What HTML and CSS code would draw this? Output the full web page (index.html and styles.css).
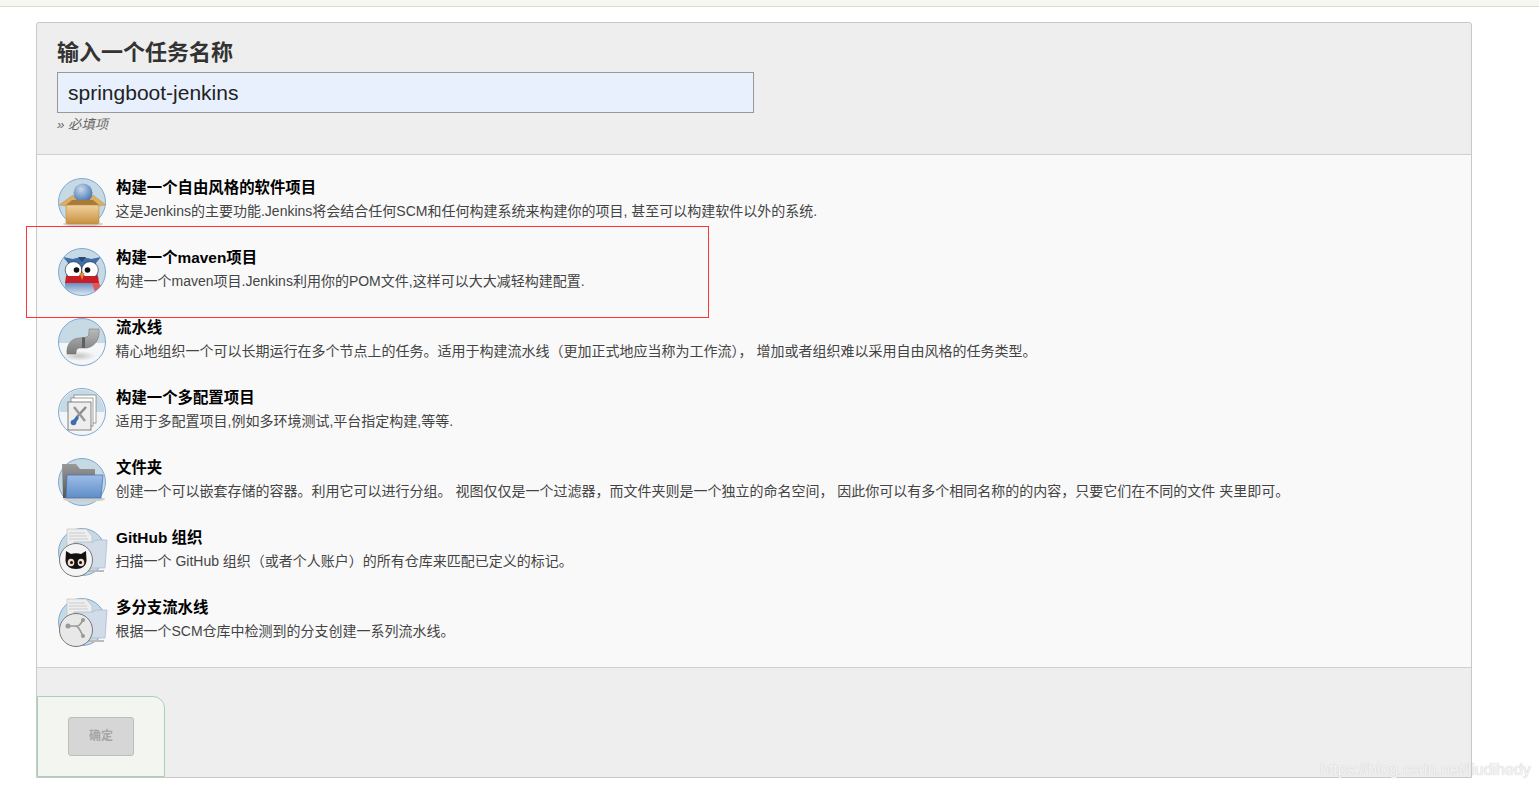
FILE: index.html
```html
<!DOCTYPE html>
<html lang="zh-CN">
<head>
<meta charset="utf-8">
<title>新建任务</title>
<link rel="stylesheet" href="styles.css">
</head>
<body>
<div class="topbar"></div>
<main class="page">
  <form class="panel">
    <section class="header">
      <h1 class="heading">输入一个任务名称</h1>
      <input class="name-input" type="text" value="springboot-jenkins">
      <div class="hint">» 必填项</div>
    </section>
    <section class="items">
      <div class="item">
        <svg class="icon" viewBox="0 0 48 50">
          <defs>
            <radialGradient id="ball" cx=".4" cy=".3" r=".8"><stop offset="0" stop-color="#c9d9ec"/><stop offset=".6" stop-color="#6f95c4"/><stop offset="1" stop-color="#3f639a"/></radialGradient>
            <linearGradient id="box" x1="0" y1="0" x2="0" y2="1"><stop offset="0" stop-color="#f0d29c"/><stop offset="1" stop-color="#c8903f"/></linearGradient>
          </defs>
          <circle cx="24" cy="24" r="23.5" fill="#c6dae6" stroke="#7fa8d4"/>
          <ellipse cx="25" cy="46" rx="20" ry="2.500" fill="#d0d0d0"/>
          <circle cx="25" cy="15" r="9.500" fill="url(#ball)"/>
          <path d="M1 27 15 17 19 24 8 28zM48 27 35 17 31 24 41 28z" fill="#dcae62" stroke="#b98a45" stroke-width=".4"/>
          <path d="M14 22H35L41 27H8z" fill="#a87a3a"/>
          <rect x="8" y="27" width="33" height="19" rx="2" fill="url(#box)" stroke="#b98a45" stroke-width=".6"/>
        </svg>
        <div class="text">
          <div class="title">构建一个自由风格的软件项目</div>
          <div class="desc">这是Jenkins的主要功能.Jenkins将会结合任何SCM和任何构建系统来构建你的项目, 甚至可以构建软件以外的系统.</div>
        </div>
      </div>
      <div class="item">
        <svg class="icon" viewBox="0 0 48 50">
          <defs>
            <clipPath id="c2"><circle cx="24" cy="24" r="23.5"/></clipPath>
            <linearGradient id="owlbody" x1="0" y1="0" x2="0" y2="1"><stop offset="0" stop-color="#5f86bd"/><stop offset="1" stop-color="#e8eef5"/></linearGradient>
          </defs>
          <circle cx="24" cy="24" r="23.5" fill="#c6dae6"/>
          <g clip-path="url(#c2)">
            <rect x="7" y="34" width="34" height="14" fill="url(#owlbody)"/>
            <path d="M5 9 15 11C20 9 28 9 33 11L43 9 38 15 40 30H8L10 15z" fill="#3f6fa8"/>
            <path d="M20 9h8l-4 5z" fill="#27497a"/>
            <circle cx="15.500" cy="22" r="8.300" fill="#fff" stroke="#223" stroke-width=".6"/>
            <circle cx="32" cy="22" r="8.300" fill="#fff" stroke="#223" stroke-width=".6"/>
            <circle cx="18.500" cy="22" r="2.800" fill="#111"/>
            <circle cx="29.500" cy="22" r="2.800" fill="#111"/>
            <path d="M8 28H40L41 35H7z" fill="#c81e26"/>
            <path d="M34 35H41L44 40 38 47z" fill="#e4565a"/>
            <path d="M21.500 25h5L24 32z" fill="#e98a2c"/>
          </g>
          <circle cx="24" cy="24" r="23.5" fill="none" stroke="#7fa8d4"/>
        </svg>
        <div class="text">
          <div class="title">构建一个maven项目</div>
          <div class="desc">构建一个maven项目.Jenkins利用你的POM文件,这样可以大大减轻构建配置.</div>
        </div>
      </div>
      <div class="item">
        <svg class="icon" viewBox="0 0 48 50">
          <defs>
            <clipPath id="c3"><circle cx="24" cy="24" r="23.5"/></clipPath>
            <linearGradient id="pipe" x1="0" y1="0" x2="0" y2="1"><stop offset="0" stop-color="#bbb"/><stop offset="1" stop-color="#7a7a7a"/></linearGradient>
            <radialGradient id="pipeshadow"><stop offset="0" stop-color="#c4c4c4"/><stop offset="1" stop-color="#f5f6f7"/></radialGradient>
          </defs>
          <circle cx="24" cy="24" r="23.5" fill="#c6dae6"/>
          <g clip-path="url(#c3)">
            <rect y="25" width="48" height="24" fill="#f5f6f7"/>
            <ellipse cx="21" cy="38" rx="17" ry="5" fill="url(#pipeshadow)"/>
          </g>
          <path d="M9 36C8 26 14 20 22 20L29 19C31 18 31 15 31 11L41 11C42 20 38 28 29 30L22 30C19 30 18 32 18 36z" fill="url(#pipe)" stroke="#6a6a6a" stroke-width=".5"/>
          <rect x="24" y="19.500" width="3" height="10.500" fill="#5f5f5f"/>
          <circle cx="24" cy="24" r="23.5" fill="none" stroke="#7fa8d4"/>
        </svg>
        <div class="text">
          <div class="title">流水线</div>
          <div class="desc">精心地组织一个可以长期运行在多个节点上的任务。适用于构建流水线（更加正式地应当称为工作流）， 增加或者组织难以采用自由风格的任务类型。</div>
        </div>
      </div>
      <div class="item">
        <svg class="icon" viewBox="0 0 48 50">
          <circle cx="24" cy="24" r="23.5" fill="#f3f5f6" stroke="#7fa8d4"/>
          <path d="M1.500 24A22.500 22.500 0 0 1 46.500 24z" fill="#c6dae6"/>
          <rect x="16" y="7" width="22" height="28" fill="#fff" stroke="#777" stroke-width=".7"/>
          <rect x="13" y="10" width="22" height="28" fill="#fff" stroke="#777" stroke-width=".7"/>
          <rect x="10" y="14" width="23" height="28" fill="#eee" stroke="#666" stroke-width=".8"/>
          <path d="M28 19 18 30" stroke="#8a8a8a" stroke-width="2.500"/>
          <path d="M16 19 27 33" stroke="#999" stroke-width="2.500"/>
          <path d="M14 33 19 28 21 30 17 36z" fill="#3d6fb0"/>
          <circle cx="15.500" cy="34.500" r="2.800" fill="#3d6fb0"/>
        </svg>
        <div class="text">
          <div class="title">构建一个多配置项目</div>
          <div class="desc">适用于多配置项目,例如多环境测试,平台指定构建,等等.</div>
        </div>
      </div>
      <div class="item">
        <svg class="icon" viewBox="0 0 48 50">
          <defs>
            <linearGradient id="fold" x1="0" y1="0" x2="0" y2="1"><stop offset="0" stop-color="#9dbde6"/><stop offset="1" stop-color="#5f8dc8"/></linearGradient>
            <linearGradient id="back" x1="0" y1="0" x2="0" y2="1"><stop offset="0" stop-color="#9a9a9a"/><stop offset="1" stop-color="#555"/></linearGradient>
          </defs>
          <circle cx="24" cy="24" r="23.5" fill="#c6dae6" stroke="#7fa8d4"/>
          <ellipse cx="26" cy="41" rx="21" ry="3" fill="#cfcfcf"/>
          <path d="M4 6H18L22 11H37V17H11L9 40H5z" fill="url(#back)"/>
          <path d="M9 17H45L43 40H8z" fill="url(#fold)" stroke="#3f6ea8" stroke-width=".7"/>
        </svg>
        <div class="text">
          <div class="title">文件夹</div>
          <div class="desc">创建一个可以嵌套存储的容器。利用它可以进行分组。 视图仅仅是一个过滤器，而文件夹则是一个独立的命名空间， 因此你可以有多个相同名称的的内容，只要它们在不同的文件 夹里即可。</div>
        </div>
      </div>
      <div class="item">
        <svg class="icon icon-wide" viewBox="0 0 50 50">
          <circle cx="24" cy="24" r="23.5" fill="#c6dae6" stroke="#7fa8d4"/>
          <path d="M9 1H28L34 8V34H9z" fill="#eee" stroke="#bbb" stroke-width=".6"/>
          <path d="M11 5H27M11 8H29M11 11H30" stroke="#ccc"/>
          <path d="M16 14H35L38 12H49L47 40H16z" fill="#d2dce8" stroke="#a5b8cf" stroke-width=".7"/>
          <path d="M30 43H46" stroke="#bbb" stroke-width="2"/>
          <circle cx="18" cy="32" r="16.500" fill="#f4f4f4" stroke="#777"/>
          <path d="M8 23 13 26C16 25 20 25 23 26L28 23 28.500 32C28.500 38 24 41 18 41S7.500 38 7.500 32z" fill="#111"/>
          <ellipse cx="13" cy="34.500" rx="3.300" ry="3.800" fill="#f4dccc"/>
          <ellipse cx="23" cy="34.500" rx="3.300" ry="3.800" fill="#f4dccc"/>
          <circle cx="13.500" cy="34.500" r="1.500" fill="#111"/>
          <circle cx="22.500" cy="34.500" r="1.500" fill="#111"/>
        </svg>
        <div class="text">
          <div class="title">GitHub 组织</div>
          <div class="desc">扫描一个 GitHub 组织（或者个人账户）的所有仓库来匹配已定义的标记。</div>
        </div>
      </div>
      <div class="item">
        <svg class="icon icon-wide" viewBox="0 0 50 50">
          <circle cx="24" cy="24" r="23.5" fill="#c6dae6" stroke="#7fa8d4"/>
          <path d="M9 1H28L34 8V34H9z" fill="#eee" stroke="#bbb" stroke-width=".6"/>
          <path d="M11 5H27M11 8H29M11 11H30" stroke="#ccc"/>
          <path d="M16 14H35L38 12H49L47 40H16z" fill="#d2dce8" stroke="#a5b8cf" stroke-width=".7"/>
          <path d="M30 43H46" stroke="#bbb" stroke-width="2"/>
          <circle cx="18" cy="32" r="16.500" fill="#e8e8e8" stroke="#777"/>
          <path d="M10 28H17C20 28 21 29 25 22M17 28C20 28 21 30 25 38" fill="none" stroke="#999" stroke-width="1.600"/>
          <circle cx="10" cy="28" r="2.500" fill="#999"/>
          <circle cx="25" cy="22" r="2" fill="#999"/>
          <circle cx="25" cy="38" r="2" fill="#999"/>
        </svg>
        <div class="text">
          <div class="title">多分支流水线</div>
          <div class="desc">根据一个SCM仓库中检测到的分支创建一系列流水线。</div>
        </div>
      </div>
    </section>
    <section class="footer">
      <div class="submit-bar">
        <button class="submit" type="button" disabled>确定</button>
      </div>
    </section>
  </form>
</main>
<div class="annotation"></div>
<div class="watermark">https://blog.csdn.net/liudihedy</div>
</body>
</html>
```
FILE: styles.css
```css
* { box-sizing: border-box; }
html, body { margin: 0; padding: 0; }
body {
  height: 788px;
  overflow: hidden;
  background: #fff;
  color: #333;
  font-family: "Liberation Sans", "Noto Sans CJK SC", sans-serif;
}
.topbar {
  height: 7px;
  background: #f6f7f1;
  border-bottom: 1px solid #dcdcd6;
}
.page { padding: 15px 67px 0 36px; }
.panel {
  height: 756px;
  display: flex;
  flex-direction: column;
  border: 1px solid #c8c8c8;
  border-radius: 3px 3px 0 0;
  background: #eee;
}
.header {
  height: 132px;
  padding: 15px 20px 0;
  border-bottom: 1px solid #cfcfcf;
}
.heading {
  margin: 0;
  font-size: 22px;
  line-height: 30px;
  font-weight: bold;
  color: #333;
}
.name-input {
  display: block;
  width: 697px;
  height: 41px;
  margin-top: 4px;
  padding: 0 10px;
  border: 1px solid #999;
  background: #e8f0fe;
  color: #222;
  font: 21px "Liberation Sans", sans-serif;
  outline: none;
}
.hint {
  margin-top: 3px;
  font-size: 13.300px;
  line-height: 18px;
  font-style: italic;
  color: #666;
}
.items {
  height: 513px;
  padding-top: 15px;
  background: #f9f9f9;
  border-bottom: 1px solid #cfcfcf;
}
.item {
  display: flex;
  height: 70px;
  padding: 8px 0 0 21px;
}
.icon {
  flex: none;
  width: 48px;
  height: 50px;
  margin-right: 10px;
}
.icon-wide {
  width: 50px;
  margin-right: 8px;
}
.title {
  font-size: 15.4px;
  line-height: 20px;
  font-weight: bold;
  color: #000;
}
.desc {
  margin-top: 3px;
  margin-left: -0.5px;
  font-size: 14px;
  line-height: 20px;
  color: #444;
  white-space: nowrap;
}
.footer { flex: 1; padding-top: 28px; }
.submit-bar {
  width: 128px;
  height: 81px;
  padding: 20px 0 0 30px;
  background: #f3f6f0;
  border: 1px solid #a8d0b8;
  border-radius: 0 12px 0 0;
}
.submit {
  display: block;
  width: 66px;
  height: 39px;
  padding: 0 0 4px;
  border: 1px solid #bdbdbd;
  border-radius: 3px;
  background: #d6d6d6;
  color: #a5a5a5;
  font-size: 12px;
  font-weight: bold;
  font-family: inherit;
}
.annotation {
  position: absolute;
  left: 26px;
  top: 226px;
  width: 683px;
  height: 92px;
  border: 1px solid #f33;
}
.watermark {
  position: absolute;
  left: 1320px;
  top: 760px;
  font-size: 16px;
  line-height: 20px;
  color: rgba(250, 250, 250, 0.9);
  text-shadow: 0 0 1px #c8c8c8, 0 0 1px #d8d8d8;
}
```
